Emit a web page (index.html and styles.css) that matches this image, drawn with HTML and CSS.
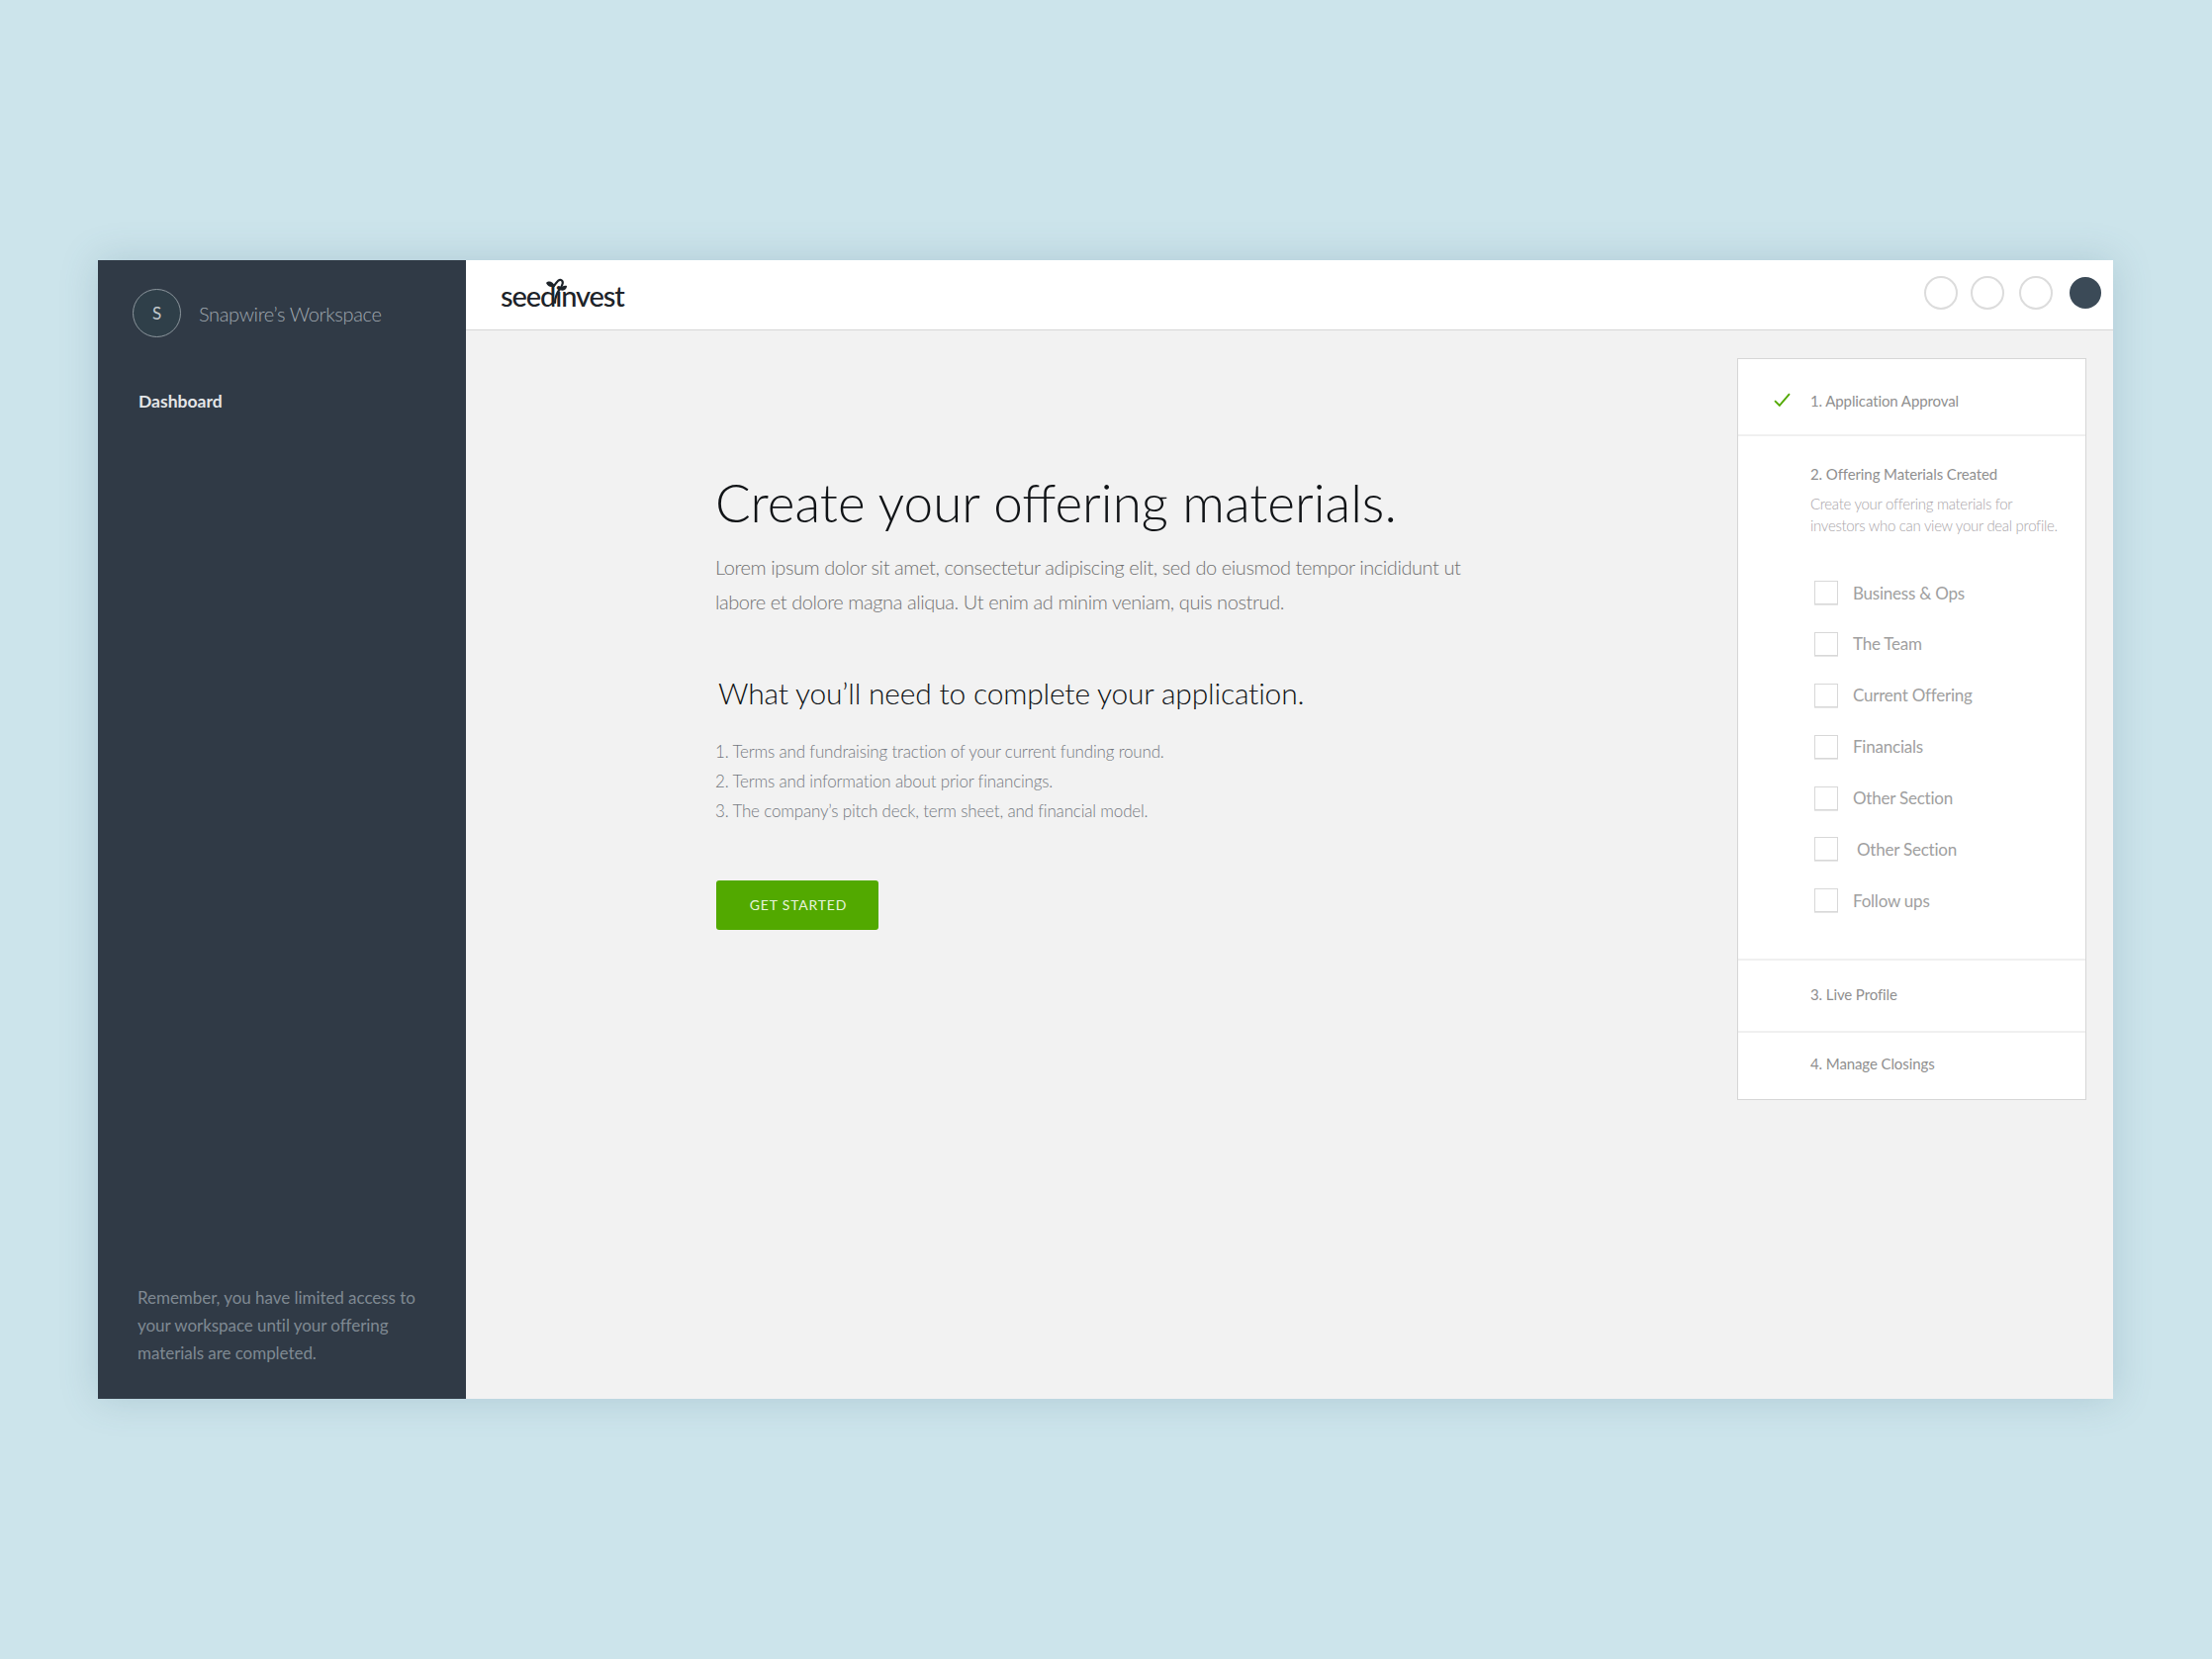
FILE: index.html
```html
<!DOCTYPE html>
<html lang="en">
<head>
    <meta charset="UTF-8">
    <meta name="viewport" content="width=device-width, initial-scale=1.0">
    <title>SeedInvest Workspace</title>
    <link rel="stylesheet" href="styles.css">
</head>
<body>
    <div class="app">
        <!-- Sidebar -->
        <aside class="sidebar">
            <div class="workspace">
                <span class="workspace-badge">S</span>
                <span class="workspace-name">Snapwire’s Workspace</span>
            </div>
            <a class="nav-link" href="#">Dashboard</a>
            <p class="sidebar-note">Remember, you have limited access to your workspace until your offering materials are completed.</p>
        </aside>

        <div class="main">
            <!-- Top bar -->
            <header class="topbar">
                <a class="logo" href="#">seedinvest
                    <svg class="logo-sprout" viewBox="0 0 30 30" aria-hidden="true">
                        <path class="sprout-stem" d="M11 9C13 7 15 2 18 3C21 4 20 8 17 12C14 16 12 21 12 26"/>
                        <path class="sprout-leaf" d="M3 6C6 3 10 5 12 9C8 11 5 10 3 6Z"/>
                        <path class="sprout-leaf" d="M17 13C18 10 21 8 24 9C24 12 21 15 17 13Z"/>
                    </svg>
                </a>
                <div class="topbar-circles">
                    <span class="circle"></span>
                    <span class="circle"></span>
                    <span class="circle"></span>
                    <span class="circle circle-dark"></span>
                </div>
            </header>

            <div class="page">
                <!-- Main content -->
                <section class="content">
                    <h1>Create your offering materials.</h1>
                    <p class="lead">Lorem ipsum dolor sit amet, consectetur adipiscing elit, sed do eiusmod tempor incididunt ut labore et dolore magna aliqua. Ut enim ad minim veniam, quis nostrud.</p>
                    <h2>What you’ll need to complete your application.</h2>
                    <ol class="needs">
                        <li>1. Terms and fundraising traction of your current funding round.</li>
                        <li>2. Terms and information about prior financings.</li>
                        <li>3. The company’s pitch deck, term sheet, and financial model.</li>
                    </ol>
                    <a class="btn-start" href="#">GET STARTED</a>
                </section>

                <!-- Progress card -->
                <aside class="steps">
                    <div class="step step-approval">
                        <svg class="step-check" viewBox="0 0 16 13" aria-hidden="true"><path d="M1 7.5L5.5 12L15 1"/></svg>
                        <span class="step-title">1. Application Approval</span>
                    </div>
                    <div class="step step-materials">
                        <span class="step-title">2. Offering Materials Created</span>
                        <p class="step-desc">Create your offering materials for investors who can view your deal profile.</p>
                        <ul class="checklist">
                            <li><span class="box"></span>Business &amp; Ops</li>
                            <li><span class="box"></span>The Team</li>
                            <li><span class="box"></span>Current Offering</li>
                            <li><span class="box"></span>Financials</li>
                            <li><span class="box"></span>Other Section</li>
                            <li class="nudged"><span class="box"></span>Other Section</li>
                            <li><span class="box"></span>Follow ups</li>
                        </ul>
                    </div>
                    <div class="step step-live">
                        <span class="step-title">3. Live Profile</span>
                    </div>
                    <div class="step step-closings">
                        <span class="step-title">4. Manage Closings</span>
                    </div>
                </aside>
            </div>
        </div>
    </div>
</body>
</html>
```

FILE: styles.css
```css
* {
    box-sizing: border-box;
}

html,
body {
    margin: 0;
    height: 100%;
}

body {
    background-color: #cce4eb;
    font-family: 'Lato', 'Open Sans', sans-serif;
    padding: 263px 100px 0 99px;
}

.app {
    display: flex;
    height: 1151px;
    box-shadow: 0 0 36px rgba(70, 110, 130, 0.22);
}

/* Sidebar */
.sidebar {
    width: 372px;
    flex-shrink: 0;
    display: flex;
    flex-direction: column;
    background-color: #303a46;
    padding: 29px 40px 32px 35px;
}

.workspace {
    display: flex;
    align-items: center;
    gap: 18px;
}

.workspace-badge {
    width: 49px;
    height: 49px;
    display: flex;
    align-items: center;
    justify-content: center;
    border: 1px solid #8c969d;
    border-radius: 50%;
    background-color: #2f3f49;
    color: #c4cacd;
    font-size: 17px;
}

.workspace-name {
    color: #a0a9b0;
    font-size: 20px;
    font-weight: 300;
    letter-spacing: -0.35px;
}

.nav-link {
    margin: 54px 0 0 6px;
    color: #e4e6e8;
    font-size: 17.5px;
    font-weight: 700;
    text-decoration: none;
}

.sidebar-note {
    margin: auto 0 0 5px;
    color: #7f8992;
    font-size: 17px;
    letter-spacing: -0.05px;
    line-height: 28px;
}

/* Top bar */
.main {
    flex: 1;
    display: flex;
    flex-direction: column;
    background-color: #f2f2f2;
}

.topbar {
    height: 71px;
    flex-shrink: 0;
    display: flex;
    align-items: center;
    justify-content: space-between;
    padding: 0 12px 0 35px;
    background-color: #fff;
    border-bottom: 1px solid #d6d6d6;
}

.logo {
    position: relative;
    color: #1d2329;
    font-size: 29px;
    font-weight: 500;
    letter-spacing: -1.1px;
    text-decoration: none;
}

.logo-sprout {
    position: absolute;
    left: 43px;
    top: -1px;
    width: 30px;
    height: 30px;
}

.sprout-stem {
    fill: none;
    stroke: #1d2329;
    stroke-width: 2.2;
    stroke-linecap: round;
}

.sprout-leaf {
    fill: #1d2329;
}

.topbar-circles {
    display: flex;
    align-items: center;
    gap: 13px;
    margin-bottom: 5px;
}

.circle {
    width: 34px;
    height: 34px;
    border: 2px solid #dcdcdc;
    border-radius: 50%;
    background-color: #fff;
}

.circle:nth-child(3) {
    margin-left: 2px;
}

.circle-dark {
    width: 32px;
    height: 32px;
    margin-left: 4px;
    border: none;
    background-color: #3b4a57;
}

/* Main content */
.page {
    flex: 1;
    display: flex;
    justify-content: space-between;
    padding: 28px 27px 0 252px;
}

.content {
    width: 780px;
    padding-top: 114px;
}

.content h1 {
    margin: 0;
    color: #101316;
    font-size: 53px;
    font-weight: 300;
    line-height: 64px;
}

.lead {
    margin: 16px 0 0;
    color: #717171;
    font-size: 20px;
    font-weight: 300;
    letter-spacing: -0.42px;
    line-height: 35px;
}

.content h2 {
    margin: 54px 0 0 3px;
    color: #0f1215;
    font-size: 30px;
    font-weight: 300;
    letter-spacing: -0.2px;
    line-height: 40px;
}

.needs {
    margin: 25px 0 0;
    padding: 0;
    list-style: none;
    color: #74787f;
    font-size: 17px;
    font-weight: 300;
    letter-spacing: -0.18px;
    line-height: 30px;
}

.btn-start {
    display: block;
    width: 164px;
    height: 50px;
    margin: 55px 0 0 1px;
    padding-left: 2px;
    border-radius: 3px;
    background-color: #52a900;
    color: #e8f4dc;
    font-size: 14px;
    letter-spacing: 0.8px;
    line-height: 49px;
    text-align: center;
    text-decoration: none;
}

/* Progress card */
.steps {
    width: 353px;
    height: 750px;
    flex-shrink: 0;
    border: 1px solid #d6d6d6;
    background-color: #fff;
    color: #8f8f8f;
}

.step {
    position: relative;
    padding-left: 73px;
    border-bottom: 2px solid #f0f0f0;
}

.step-title {
    display: block;
    font-size: 15px;
    font-weight: 400;
    letter-spacing: -0.1px;
    line-height: 20px;
}

.step-approval {
    height: 78px;
    padding-top: 32px;
}

.step-check {
    position: absolute;
    left: 36px;
    top: 34px;
    width: 17px;
    height: 14px;
}

.step-check path {
    fill: none;
    stroke: #52a900;
    stroke-width: 1.8;
}

.step-materials {
    height: 530px;
    padding-top: 28px;
}

.step-desc {
    margin: 9px 16px 0 0;
    color: #a9a5a9;
    font-size: 15px;
    font-weight: 300;
    letter-spacing: -0.3px;
    line-height: 22px;
}

.checklist {
    margin: 45px 0 0 -73px;
    padding: 0 0 0 77px;
    list-style: none;
    color: #a0a0a0;
    font-size: 17px;
    letter-spacing: -0.22px;
}

.checklist li {
    display: flex;
    align-items: center;
    height: 24px;
    margin-bottom: 27.9px;
}

.box {
    width: 24px;
    height: 24px;
    flex-shrink: 0;
    margin-right: 15px;
    border: 1px solid #d8d8d8;
    box-shadow: 0 1px 0 #e6e6e6;
}

.nudged .box {
    margin-right: 19px;
}

.step-live {
    height: 73px;
    padding-top: 24px;
}

.step-closings {
    height: 67px;
    padding-top: 21px;
    border-bottom: none;
}
```
